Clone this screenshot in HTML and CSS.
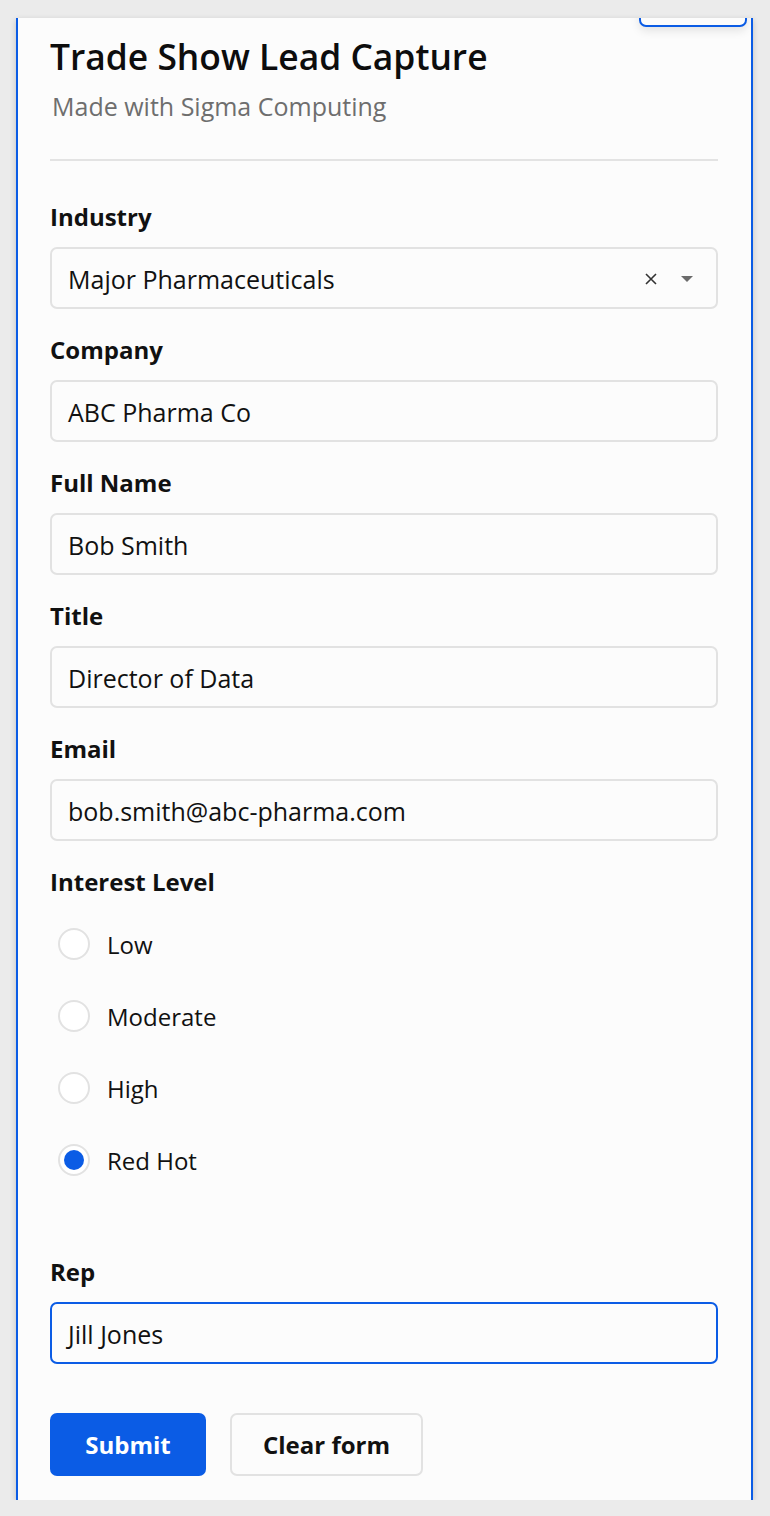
FILE: index.html
```html
<!DOCTYPE html>
<html>
<head>
<meta charset="utf-8">
<link rel="stylesheet" href="styles.css">
</head>
<body>
<div class="card">
  <div class="top-tab"></div>
  <header class="header">
    <h1 class="title">Trade Show Lead Capture</h1>
    <p class="subtitle">Made with Sigma Computing</p>
  </header>
  <hr class="divider">
  <form class="form">
    <div class="field">
      <label class="label">Industry</label>
      <div class="input select">
        <span class="value">Major Pharmaceuticals</span>
        <span class="select-icons">
          <svg class="clear-x" width="14" height="14" viewBox="0 0 14 14"><path d="M2 2 L12 12 M12 2 L2 12" stroke="#333" stroke-width="1.6" fill="none"/></svg>
          <svg class="caret" width="14" height="8" viewBox="0 0 14 8"><path d="M1 1 H13 L7 7 Z" fill="#6b6b6b"/></svg>
        </span>
      </div>
    </div>
    <div class="field">
      <label class="label">Company</label>
      <div class="input"><span class="value">ABC Pharma Co</span></div>
    </div>
    <div class="field">
      <label class="label">Full Name</label>
      <div class="input"><span class="value">Bob Smith</span></div>
    </div>
    <div class="field">
      <label class="label">Title</label>
      <div class="input"><span class="value">Director of Data</span></div>
    </div>
    <div class="field">
      <label class="label">Email</label>
      <div class="input"><span class="value">bob.smith@abc-pharma.com</span></div>
    </div>
    <div class="field radios-field">
      <label class="label">Interest Level</label>
      <div class="radio-list">
        <div class="radio-row"><span class="radio"></span><span class="radio-text">Low</span></div>
        <div class="radio-row"><span class="radio"></span><span class="radio-text">Moderate</span></div>
        <div class="radio-row"><span class="radio"></span><span class="radio-text">High</span></div>
        <div class="radio-row"><span class="radio checked"></span><span class="radio-text">Red Hot</span></div>
      </div>
    </div>
    <div class="field rep-field">
      <label class="label">Rep</label>
      <div class="input focused"><span class="value">Jill Jones</span></div>
    </div>
    <div class="buttons">
      <button type="button" class="btn btn-primary">Submit</button>
      <button type="button" class="btn btn-secondary">Clear form</button>
    </div>
  </form>
</div>
</body>
</html>
```

FILE: styles.css
```css
* { box-sizing: border-box; }
html, body {
  margin: 0;
  padding: 0;
  background: #ebebeb;
  font-family: "Open Sans", Lato, sans-serif;
  color: #111;
}
.card {
  position: relative;
  overflow: hidden;
  margin: 18px 0 0 16px;
  width: 737px;
  height: 1482px;
  background: #fcfcfc;
  border-left: 2px solid #0b5ce5;
  border-right: 2px solid #0b5ce5;
  box-shadow: 0 2px 6px rgba(0,0,0,0.18);
  padding: 16px 33px 0 32px;
}
.top-tab {
  position: absolute;
  top: -30px;
  left: 621px;
  width: 108px;
  height: 39px;
  border: 2px solid #0b5ce5;
  border-radius: 7px;
  background: #fcfcfc;
  box-shadow: 0 4px 10px rgba(0,0,0,0.1);
}
.header { margin: 0; }
.title {
  margin: 0;
  font-size: 35.4px;
  line-height: 44px;
  font-weight: 600;
  color: #0d0d0d;
}
.subtitle {
  margin: 12px 0 0 2px;
  font-size: 25px;
  line-height: 32px;
  color: #6e6e6e;
}
.divider {
  margin: 37px 0 0 0;
  border: 0;
  height: 2px;
  background: #e3e3e3;
}
.form {
  margin-top: 41px;
  display: flex;
  flex-direction: column;
  gap: 26px;
}
.field {
  display: flex;
  flex-direction: column;
  gap: 15px;
}
.label {
  font-size: 24px;
  line-height: 30px;
  font-weight: 700;
  color: #111;
}
.input {
  height: 62px;
  border: 2px solid #e2e2e2;
  border-radius: 7px;
  background: #fcfcfc;
  display: flex;
  align-items: center;
  padding: 2px 16px 0;
  font-size: 25px;
  color: #111;
}
.input.focused { border-color: #0b5ce5; }
.select { justify-content: space-between; }
.select-icons {
  display: flex;
  align-items: center;
  gap: 22px;
  padding-right: 6px;
}
.radios-field { gap: 11px; }
.radio-list {
  display: flex;
  flex-direction: column;
}
.radio-row {
  height: 72px;
  display: flex;
  align-items: center;
  padding-left: 8px;
  gap: 17px;
}
.radio {
  width: 32px;
  height: 32px;
  border-radius: 50%;
  border: 2px solid #e2e2e2;
  background: #fff;
  position: relative;
}
.radio.checked::after {
  content: "";
  position: absolute;
  left: 4px;
  top: 4px;
  width: 20px;
  height: 20px;
  border-radius: 50%;
  background: #0b5ce5;
}
.radio-text { font-size: 24px; }
.rep-field { margin-top: 35px; }
.buttons {
  margin-top: 23px;
  display: flex;
  gap: 24px;
}
.btn {
  height: 63px;
  border-radius: 7px;
  font-family: inherit;
  font-size: 24px;
  font-weight: 700;
  padding: 0;
  cursor: pointer;
}
.btn-primary {
  width: 156px;
  background: #0b5ce5;
  border: 0;
  color: #fff;
}
.btn-secondary {
  width: 193px;
  background: #fcfcfc;
  border: 2px solid #e2e2e2;
  color: #111;
}
```
